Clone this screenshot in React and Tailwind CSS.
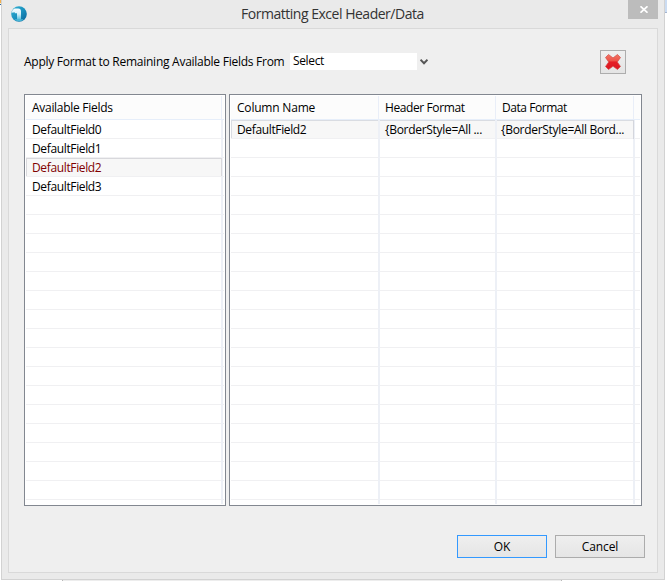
const ROWS = Array.from({ length: 21 }, (_, i) => i);
const FIELDS = ["DefaultField0", "DefaultField1", "DefaultField2", "DefaultField3"];

function AvailableFields() {
  return (
    <div className="flex h-[412px] w-[202px] flex-col border border-[#828790] bg-white p-px">
      <div className="flex h-[23px] shrink-0 bg-[#fcfcfc]">
        <div className="flex w-[196px] items-center border-r border-[#e9eef8] pt-px pl-[6px] tracking-[-0.29px]">
          Available Fields
        </div>
      </div>
      <div className="min-h-0 flex-1 overflow-hidden border-t border-[#e6eefa]">
        {ROWS.map((i) => (
          <div key={i} className="flex h-[19px] border-b border-[#f0f0f2]">
            <div
              className={
                i === 2
                  ? "flex h-[18px] w-[196px] items-center border border-b-0 border-[#d8d8dc] bg-[#f7f7f7] pt-px pl-[5px] tracking-[-0.36px] text-[#800000]"
                  : "flex w-[195px] items-center pt-[2px] pl-[6px] tracking-[-0.36px]"
              }
            >
              {FIELDS[i]}
            </div>
            <div className={i === 2 ? "-mb-px w-px bg-[#edf0f6]" : "-mb-px w-[2px] bg-[#edf0f6]"} />
          </div>
        ))}
      </div>
    </div>
  );
}

const COLUMNS = [
  { title: "Column Name", value: "DefaultField2", head: "w-[148px] pl-[6px] tracking-[-0.2px]", cell: "w-[147px] pl-[5px] tracking-[-0.36px]", first: "border-t border-l" },
  { title: "Header Format", value: "{BorderStyle=All ...", head: "w-[117px] pl-[6px] tracking-[-0.4px]", cell: "w-[115px] pl-[5px] tracking-[-0.3px]", first: "border-t" },
  { title: "Data Format", value: "{BorderStyle=All Bord...", head: "w-[138px] pl-[6px] tracking-[-0.45px]", cell: "w-[136px] pl-[4px] tracking-[-0.3px]", first: "border-t" },
];

function FormatTable() {
  return (
    <div className="flex h-[412px] w-[413px] flex-col border border-[#828790] bg-white p-px">
      <div className="flex h-[23px] shrink-0 bg-[#fcfcfc]">
        {COLUMNS.map((c) => (
          <div key={c.title} className={`flex items-center border-r border-[#e9eef8] pt-px ${c.head}`}>
            {c.title}
          </div>
        ))}
      </div>
      <div className="min-h-0 flex-1 overflow-hidden border-t border-[#e6eefa]">
        {ROWS.map((i) => (
          <div key={i} className="flex h-[19px] border-b border-[#f0f0f2]">
            {COLUMNS.map((c, n) => (
              <div key={c.title} className="flex">
                <div
                  className={`flex items-center whitespace-nowrap ${c.cell} ${i === 0 ? `border-[#d9dce2] bg-[#f7f7f7] ${c.first}` : ""}`}
                >
                  {i === 0 ? c.value : null}
                </div>
                <div
                  className={
                    i === 0 && n === 2
                      ? "-mb-px w-[2px] border-l border-[#d4d6dd] bg-[#edf0f6]"
                      : "-mb-px w-[2px] bg-[#edf0f6]"
                  }
                />
              </div>
            ))}
          </div>
        ))}
      </div>
    </div>
  );
}

function AppLogo() {
  return (
    <svg className="mt-[6px] ml-[3px] size-4" viewBox="0 0 16 16">
      <defs>
        <linearGradient id="orb" x1="0" y1="0" x2="1" y2="1">
          <stop offset="0" stopColor="#35b2d3" />
          <stop offset="0.5" stopColor="#1a92bf" />
          <stop offset="1" stopColor="#0a6298" />
        </linearGradient>
        <linearGradient id="stem" x1="0" y1="0" x2="0" y2="1">
          <stop offset="0" stopColor="#f6fcff" />
          <stop offset="0.5" stopColor="#d8f0f8" />
          <stop offset="1" stopColor="#55c0de" />
        </linearGradient>
      </defs>
      <circle cx="8" cy="8" r="7.8" fill="url(#orb)" />
      <path d="M.6 6.8 1.6 4 3.5 2.6H7.2C9.2 2.6 10 3.8 10 5.4V13.5H6V7.2H3.8V6.2z" fill="url(#stem)" />
      <path d="M3.5 13.6C5.5 12.8 10.5 12.8 12.5 13.6 10.5 15.8 5.8 15.9 3.5 13.6z" fill="#48b7d8" />
    </svg>
  );
}

function RedCross() {
  return (
    <svg className="size-4" viewBox="0 0 16 16">
      <defs>
        <linearGradient id="cross" x1="0" y1="0" x2="0" y2="1">
          <stop offset="0" stopColor="#f07764" />
          <stop offset="0.42" stopColor="#ee5248" />
          <stop offset="0.5" stopColor="#e51e25" />
          <stop offset="1" stopColor="#da1824" />
        </linearGradient>
      </defs>
      <path
        d="M3.5.5 8 3.9 12.5.5 15.5 3.5 12.3 8 15.5 12.5 12.5 15.5 8 12.3 3.5 15.5.5 12.5 3.7 8 .5 3.5z"
        fill="url(#cross)"
        stroke="#d64a48"
        strokeWidth="0.7"
        strokeLinejoin="round"
      />
    </svg>
  );
}

export default function App() {
  return (
    <div className="flex h-[581px] w-[667px] flex-col overflow-hidden bg-white font-['Open_Sans','Noto_Sans',sans-serif] text-[12px] leading-[16px] text-black">
      <div className="flex h-[580px]">
        <div className="w-px bg-white">
          <div className="h-[3px] bg-[#f6b04e]" />
          <div className="h-px bg-[#fff0c0]" />
          <div className="h-px bg-[#31639c]" />
        </div>
        <div className="flex w-[664px] flex-col border border-t-0 border-[#d2d2d2] bg-[#eaeaea] px-[6px] pb-[6px]">
          <div className="flex h-[28px] shrink-0">
            <div className="w-[233px]">
              <AppLogo />
            </div>
            <div className="w-[387px] pt-[4px] text-[14px] leading-[20px] tracking-[-0.48px] text-[#333333]">
              Formatting Excel Header/Data
            </div>
            <div className="flex h-[19px] w-[30px] items-center justify-center bg-[#bcbcbc]">
              <svg className="ml-[2px] h-[7px] w-[8px]" viewBox="0 0 8 7" stroke="white" strokeWidth="1.7">
                <path d="M.5.3 7.5 6.7M7.5.3.5 6.7" />
              </svg>
            </div>
          </div>
          <div className="flex flex-1 flex-col border border-[#d9d9d9] bg-[#efefef] pr-[12px] pl-[15px]">
            <div className="flex h-[65px] items-start">
              <div className="mt-[25px] w-[266px] tracking-[-0.26px] whitespace-nowrap">
                Apply Format to Remaining Available Fields From
              </div>
              <div className="mt-[24px] h-[17px] w-[127px] bg-white pl-[3px] tracking-[-0.35px]">Select</div>
              <svg className="mt-[30px] ml-[3px] h-[6px] w-[8px]" viewBox="0 0 8 6" fill="none" stroke="#555" strokeWidth="2">
                <path d="M.5.7 4 4.3 7.5.7" />
              </svg>
              <div className="mt-[21px] ml-[172px] flex h-[24px] w-[26px] items-center justify-center border border-[#adadad] bg-linear-to-b from-[#efefef] to-[#e4e4e4]">
                <RedCross />
              </div>
            </div>
            <div className="flex gap-[3px]">
              <AvailableFields />
              <FormatTable />
            </div>
            <div className="mt-[29px] flex justify-end gap-[8px]">
              <button className="h-[23px] w-[90px] border border-[#3399ff] bg-linear-to-b from-[#efefef] to-[#e5e5e5]">OK</button>
              <button className="h-[23px] w-[90px] border border-[#acacac] bg-linear-to-b from-[#efefef] to-[#e5e5e5] tracking-[-0.1px]">
                Cancel
              </button>
            </div>
          </div>
        </div>
        <div className="w-[2px] bg-white">
          <div className="h-[12px] bg-[#cbdcf2]" />
          <div className="h-px bg-[#a5b5cf]" />
        </div>
      </div>
      <div className="flex h-px">
        <div className="w-[62px]" />
        <div className="w-[500px] border-x border-[#b8b8b8] bg-[#ededed]" />
      </div>
    </div>
  );
}
